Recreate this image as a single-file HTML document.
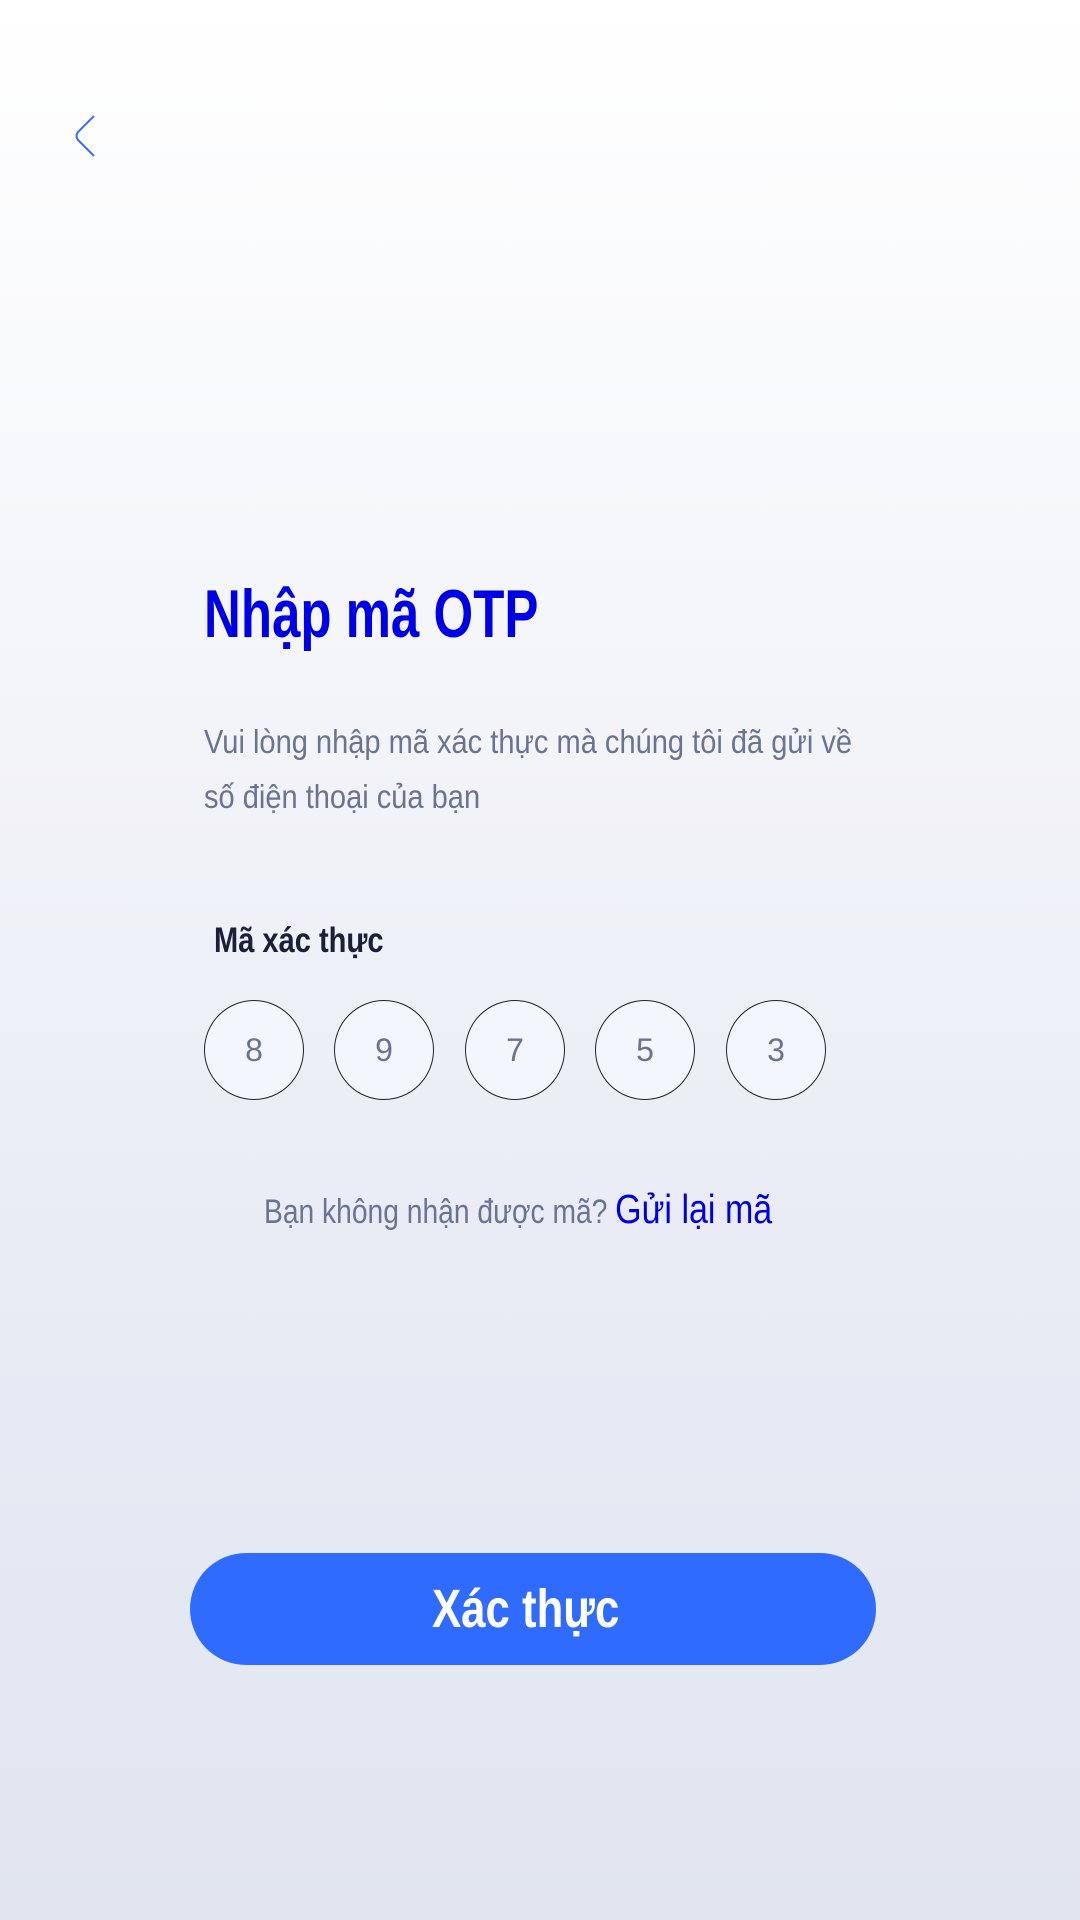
<!DOCTYPE html>
<html><head><meta charset="utf-8"><style>
html,body{margin:0;padding:0}
body{width:1080px;height:1920px;position:relative;overflow:hidden;background:linear-gradient(#ffffff 0%,#f3f5f9 35%,#e9ecf5 65%,#e0e5f0 100%);font-family:"Liberation Sans",sans-serif}
.a{position:absolute;white-space:nowrap;transform-origin:0 0}
.c{position:absolute;width:98px;height:98px;border:1px solid #222;border-radius:50%;background:#f3f6fd;top:1000px;text-align:center;line-height:98px;font-size:32px;color:#6b7393}
</style></head><body>
<svg class="a" style="left:70px;top:110px" width="30" height="52" viewBox="0 0 30 52"><path d="M24 6 L8 22 Q5 26 8 30 L24 46" fill="none" stroke="#3b6cf5" stroke-width="2"/></svg>
<div class="a" style="left:204px;top:575px;font-size:68px;font-weight:bold;color:#0000e6;transform:scaleX(0.75)">Nhập mã OTP</div>
<div class="a" style="left:204px;top:714px;font-size:33px;line-height:55px;color:#6b7393;transform:scaleX(0.88)">Vui lòng nhập mã xác thực mà chúng tôi đã gửi về<br>số điện thoại của bạn</div>
<div class="a" style="left:214px;top:921px;font-size:35px;font-weight:bold;color:#1a2038;transform:scaleX(0.83)">Mã xác thực</div>
<div class="c" style="left:204px">8</div>
<div class="c" style="left:334px">9</div>
<div class="c" style="left:465px">7</div>
<div class="c" style="left:595px">5</div>
<div class="c" style="left:726px">3</div>
<div class="a" style="left:264px;top:1186px;font-size:34px;color:#6b7393;transform:scaleX(0.83)">Bạn không nhận được mã? <span style="font-size:41px;color:#0000e0">Gửi lại mã</span></div>
<div class="a" style="left:190px;top:1553px;width:686px;height:112px;border-radius:56px;background:#306bff"></div>
<div class="a" style="left:184px;top:1553px;width:686px;height:112px;color:#fff;font-size:54px;font-weight:bold;text-align:center;line-height:112px;transform:scaleX(0.81);transform-origin:336px 0">Xác thực</div>
</body></html>
